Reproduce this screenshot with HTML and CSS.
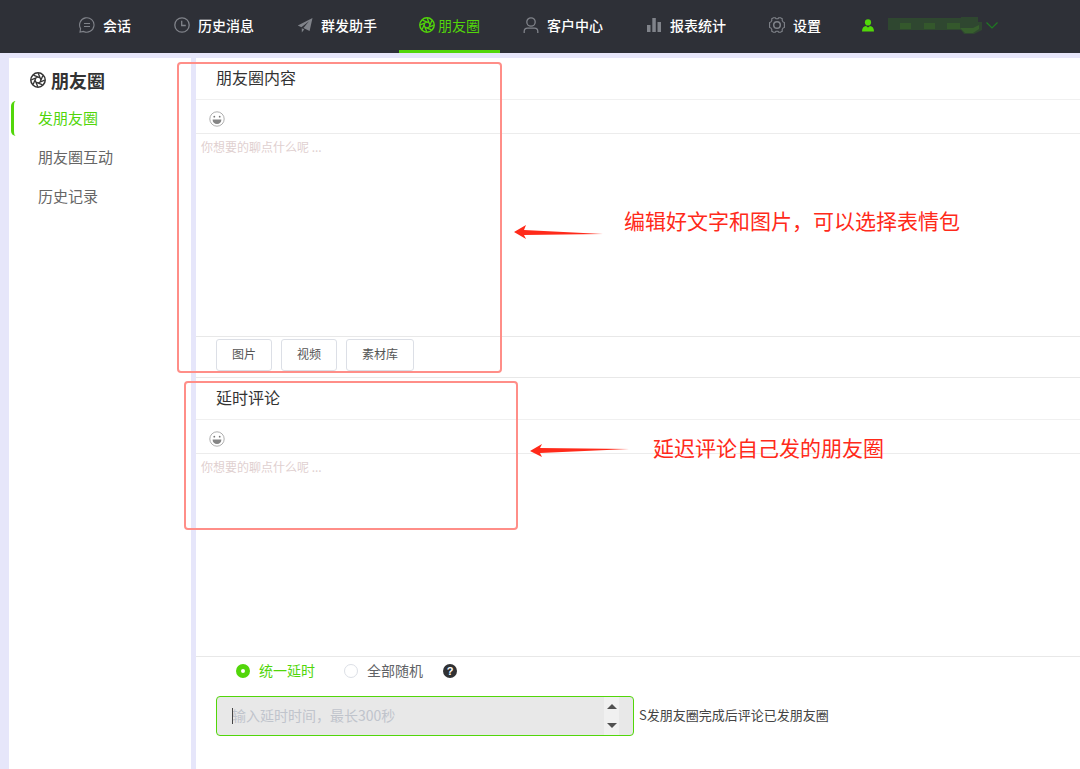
FILE: index.html
```html
<!DOCTYPE html>
<html lang="zh-CN">
<head>
<meta charset="utf-8">
<title>朋友圈</title>
<link rel="stylesheet" href="styles.css">
</head>
<body>
<svg class="defs" aria-hidden="true">
  <symbol id="aperture" viewBox="0 0 16 16">
    <g fill="none" stroke="currentColor" stroke-width="1.3">
      <circle cx="8" cy="8" r="7.200" stroke-width="1.500"/>
      <path d="M10.100 10.100L12.900 3.400M8 11l6.700-2.800M5.900 10.100l6.700 2.800M5 8l2.800 6.700M5.900 5.900L3.100 12.600M8 5L1.300 7.800M10.100 5.900L3.400 3.100M11 8L8.200 1.300"/>
    </g>
  </symbol>
  <symbol id="smile" viewBox="0 0 16 16">
    <circle cx="8" cy="8" r="7.200" fill="none" stroke="#a6a6a6" stroke-width="0.900"/>
    <circle cx="5.300" cy="5.700" r="0.900" fill="#777"/>
    <circle cx="10.700" cy="5.700" r="0.900" fill="#777"/>
    <path d="M3.600 8.500h8.800c0 2.800-1.800 4.500-4.400 4.500s-4.400-1.700-4.400-4.500z" fill="#858585"/>
  </symbol>
</svg>

<header class="topbar">
  <nav class="nav">
    <a class="nav-item" href="#"><svg class="icon" viewBox="0 0 16 16" fill="none" stroke="currentColor" stroke-width="1.1"><path d="M1 15l.6-3.4A7.2 7.2 0 1 1 4.6 14.4zM5 6.5h6M5 9.5h6"/></svg>会话</a>
    <a class="nav-item" href="#"><svg class="icon" viewBox="0 0 16 16" fill="none" stroke="currentColor" stroke-width="1.3"><circle cx="8" cy="8" r="7.2"/><path d="M7.7 3.8v4.7h4.1"/></svg>历史消息</a>
    <a class="nav-item" href="#"><svg class="icon" viewBox="0 0 16 16" fill="currentColor"><path d="M15.5 1L.8 8.6l3.6 1.7L12 4.2 6.4 11l6.2 3zM4.8 11.2v4.3l2.4-2.9z"/></svg>群发助手</a>
    <a class="nav-item active" href="#"><svg class="icon"><use href="#aperture"/></svg>朋友圈</a>
    <a class="nav-item" href="#"><svg class="icon" viewBox="0 0 16 16" fill="none" stroke="currentColor" stroke-width="1.3"><circle cx="8" cy="5" r="4.2"/><path d="M1.2 16v-1.6c0-2 1.4-3.3 3.3-3.3h7c1.9 0 3.3 1.3 3.3 3.3V16"/></svg>客户中心</a>
    <a class="nav-item" href="#"><svg class="icon" viewBox="0 0 16 16" fill="currentColor"><path d="M1 8h3.500v7H1zM6.300 1h3.500v14H6.300zM11.500 5H15v10h-3.500z"/></svg>报表统计</a>
    <a class="nav-item" href="#"><svg class="icon" viewBox="0 0 16 16" fill="none" stroke="currentColor" stroke-width="1.1"><path d="M4.500.8h1.800l.7.900h2l.7-.9h1.800l1.800 1.100-.2 1.300.9 1.700 1.400.6v5l-1.400.6-.9 1.700.2 1.300-1.800 1.100H9.700L9 14.300H7l-.7.900H4.500L2.700 14.100l.2-1.300L2 11.100l-1.400-.6v-5L2 4.900l.9-1.700-.2-1.300z"/><circle cx="8" cy="8" r="3.300" stroke-width="1.500"/></svg>设置</a>
  </nav>
  <button class="account" type="button" aria-label="账号">
    <svg class="person" viewBox="0 0 12 13" fill="#52d60a"><circle cx="6" cy="3.400" r="3.100"/><path d="M0 12.500c0-3.400 1.500-5 4-5.400L6 8.500l2-1.400c2.500.4 4 2 4 5.400z"/></svg>
    <svg class="mask" viewBox="0 0 95 18"><path fill="#2f4730" d="M0 1h73V0h17v5h4v8l-8 4H76l-3-4H0z"/><path fill="#34582c" d="M12 6h11v6H12zM36 6h11v6H36zM59 6h13v6H59z"/><path fill="#375f2d" d="M72 11h13l6-3v4l-6 4h-8l-4-4z"/></svg>
    <svg class="chevron" viewBox="0 0 12 7" fill="none" stroke="#1f7a22" stroke-width="1.200"><path d="M.5.5L6 6 11.500.5"/></svg>
  </button>
</header>

<div class="layout">
  <aside class="sidebar">
    <h1 class="side-title"><svg class="icon"><use href="#aperture"/></svg>朋友圈</h1>
    <a class="side-link current" href="#">发朋友圈</a>
    <a class="side-link" href="#">朋友圈互动</a>
    <a class="side-link" href="#">历史记录</a>
  </aside>

  <main class="content">
    <section>
      <h2 class="section-title">朋友圈内容</h2>
      <div class="toolbar"><button class="emoji" type="button" aria-label="表情"><svg class="icon"><use href="#smile"/></svg></button></div>
      <textarea class="editor" aria-label="朋友圈内容" placeholder="你想要的聊点什么呢 ..."></textarea>
      <div class="attachments">
        <button class="btn" type="button">图片</button>
        <button class="btn" type="button">视频</button>
        <button class="btn" type="button">素材库</button>
      </div>
    </section>
    <section>
      <h2 class="section-title">延时评论</h2>
      <div class="toolbar"><button class="emoji" type="button" aria-label="表情"><svg class="icon"><use href="#smile"/></svg></button></div>
      <textarea class="editor" aria-label="延时评论" placeholder="你想要的聊点什么呢 ..."></textarea>
    </section>
    <section class="delay">
      <div class="modes">
        <label class="mode"><input class="radio" type="radio" name="mode" checked><span>统一延时</span></label>
        <label class="mode"><input class="radio" type="radio" name="mode"><span>全部随机</span></label>
        <button class="help" type="button" aria-label="帮助">?</button>
      </div>
      <div class="time-row">
        <div class="time-field">
          <input class="time-input" id="delay" type="text" inputmode="numeric" placeholder="输入延时时间，最长300秒">
          <span class="caret"></span>
          <div class="spinner">
            <button class="step" type="button" aria-label="增加"><svg viewBox="0 0 10 5"><path d="M0 5l5-5 5 5z"/></svg></button>
            <button class="step" type="button" aria-label="减少"><svg viewBox="0 0 10 5"><path d="M0 0l5 5 5-5z"/></svg></button>
          </div>
        </div>
        <label class="time-label" for="delay">S发朋友圈完成后评论已发朋友圈</label>
      </div>
    </section>
  </main>
</div>

<div class="mark-box mark-post"></div>
<div class="mark-box mark-comment"></div>
<svg class="arrow arrow-post" viewBox="0 0 90 14"><path d="M0 7L12 0l-2 5 79 4-79 1 2 4z"/></svg>
<svg class="arrow arrow-comment" viewBox="0 0 100 14"><path d="M0 8L12 1l-2 4 89 1-89 4 2 4z"/></svg>
<p class="note note-post">编辑好文字和图片，可以选择表情包</p>
<p class="note note-comment">延迟评论自己发的朋友圈</p>
</body>
</html>
```

FILE: styles.css
```css
* { box-sizing: border-box; }

body {
  position: relative;
  display: flex;
  flex-direction: column;
  min-height: 100vh;
  margin: 0;
  overflow-x: hidden;
  background: #e6e6fa;
  color: #333;
  font-family: "Noto Sans CJK SC", sans-serif;
  font-size: 14px;
}

a { color: inherit; text-decoration: none; }
h1, h2, p { margin: 0; font-weight: 400; }
button { padding: 0; border: 0; background: none; color: inherit; font-family: inherit; }
.defs { display: none; }
.icon { flex: none; width: 16px; height: 16px; }

/* Top bar */
.topbar {
  display: flex;
  height: 53px;
  padding-left: 59px;
  background: #2e3037;
}
.nav { display: flex; gap: 3px; }
.nav-item {
  display: flex;
  align-items: center;
  gap: 8px;
  padding: 0 20px 4px;
  color: #fff;
  font-weight: 500;
  white-space: nowrap;
}
.nav-item .icon { color: #80838a; }
.nav-item.active {
  gap: 3px;
  margin-left: -1px;
  padding-bottom: 1px;
  border-bottom: 3px solid #52d60a;
  color: #52d60a;
  font-weight: 400;
}
.nav-item.active .icon { color: #52d60a; }
.account { display: flex; align-items: center; margin-left: 21px; padding-bottom: 3px; }
.person { width: 12px; height: 13px; }
.mask { width: 95px; height: 18px; margin: 2px 3px 0 14px; }
.chevron { width: 12px; height: 7px; }

/* Body layout */
.layout { display: flex; flex: 1; gap: 5px; padding: 5px 0 0 9px; }
.sidebar { flex: none; width: 182px; padding: 4px 0 0 2px; background: #fff; }
.side-title {
  display: flex;
  align-items: center;
  gap: 5px;
  height: 39px;
  padding: 0 0 3px 19px;
  font-size: 18px;
  font-weight: 700;
}
.side-link {
  display: block;
  height: 35px;
  margin-bottom: 4px;
  padding-left: 24px;
  border-left: 3px solid transparent;
  border-radius: 5px;
  color: #666;
  font-size: 15px;
  line-height: 33px;
}
.side-link.current { border-left-color: #52d60a; color: #52d60a; }

.content { flex: 1; min-width: 0; background: #fff; }
.section-title {
  height: 42px;
  padding-left: 20px;
  border-bottom: 1px solid #f0f0f0;
  font-size: 16px;
  line-height: 39px;
}
.toolbar {
  display: flex;
  align-items: center;
  height: 34px;
  padding: 4px 0 0 13px;
  border-bottom: 1px solid #ececec;
}
.emoji { display: flex; }
.editor {
  display: block;
  width: 100%;
  height: 203px;
  padding: 4px 5px;
  border: 0;
  border-bottom: 1px solid #e8e8e8;
  outline: 0;
  resize: none;
  font-family: inherit;
  font-size: 12px;
  line-height: 18px;
}
.editor::placeholder { color: #dfd0d0; }
.attachments {
  display: flex;
  gap: 9px;
  padding: 2px 20px 6px;
  border-bottom: 1px solid #e8e8e8;
}
.btn {
  height: 32px;
  padding: 0 15px 3px;
  border: 1px solid #dcdfe6;
  border-radius: 3px;
  color: #555;
  font-size: 12px;
}

/* Delay settings */
.delay { padding: 4px 20px 0; }
.modes { display: flex; align-items: center; gap: 20px; height: 20px; padding-left: 20px; }
.mode { display: flex; align-items: center; gap: 9px; margin-right: 9px; color: #606266; }
.mode + .mode { margin-right: 0; }
.mode span { padding-bottom: 2px; }
.mode:has(:checked) { color: #52d60a; }
.radio {
  width: 14px;
  height: 14px;
  margin: 0;
  appearance: none;
  border: 1px solid #dcdfe6;
  border-radius: 50%;
}
.radio:checked { border: 5px solid #52d60a; }
.help {
  width: 14px;
  height: 14px;
  border-radius: 50%;
  background: #303133;
  color: #fff;
  font: 700 11px/14px "Liberation Sans", sans-serif;
}
.time-row { display: flex; align-items: center; gap: 5px; margin-top: 15px; }
.time-field { position: relative; flex: 0 1 418px; }
.time-input {
  display: block;
  width: 100%;
  height: 40px;
  padding: 0 50px 2px 15px;
  border: 1px solid #52d60a;
  border-radius: 4px;
  outline: 0;
  background: #e8e8e8;
  font-family: inherit;
  font-size: 14px;
}
.time-input::placeholder { color: #c0c4cc; }
.caret { position: absolute; top: 12px; left: 16px; width: 1px; height: 16px; background: #444; }
.spinner {
  position: absolute;
  top: 1px;
  right: 15px;
  bottom: 1px;
  display: flex;
  flex-direction: column;
  width: 15px;
  background: #f0f0f0;
}
.step { display: flex; flex: 1; align-items: center; justify-content: center; }
.step svg { width: 10px; height: 5px; fill: #505050; }
.time-label { padding-bottom: 3px; color: #444; font-size: 13px; white-space: nowrap; }

/* Annotations over the page */
.mark-box, .arrow, .note { position: absolute; pointer-events: none; }
.mark-box { border: 2px solid #ff8e88; border-radius: 4px; }
.mark-post { top: 62px; left: 177px; width: 325px; height: 311px; }
.mark-comment { top: 381px; left: 184px; width: 334px; height: 149px; }
.arrow { fill: #ff2a1a; height: 14px; }
.arrow-post { top: 225px; left: 514px; width: 90px; }
.arrow-comment { top: 443px; left: 530px; width: 100px; }
.note { color: #ff2a1a; font-size: 21px; line-height: 30px; white-space: nowrap; }
.note-post { top: 205px; left: 624px; }
.note-comment { top: 432px; left: 653px; }
```
